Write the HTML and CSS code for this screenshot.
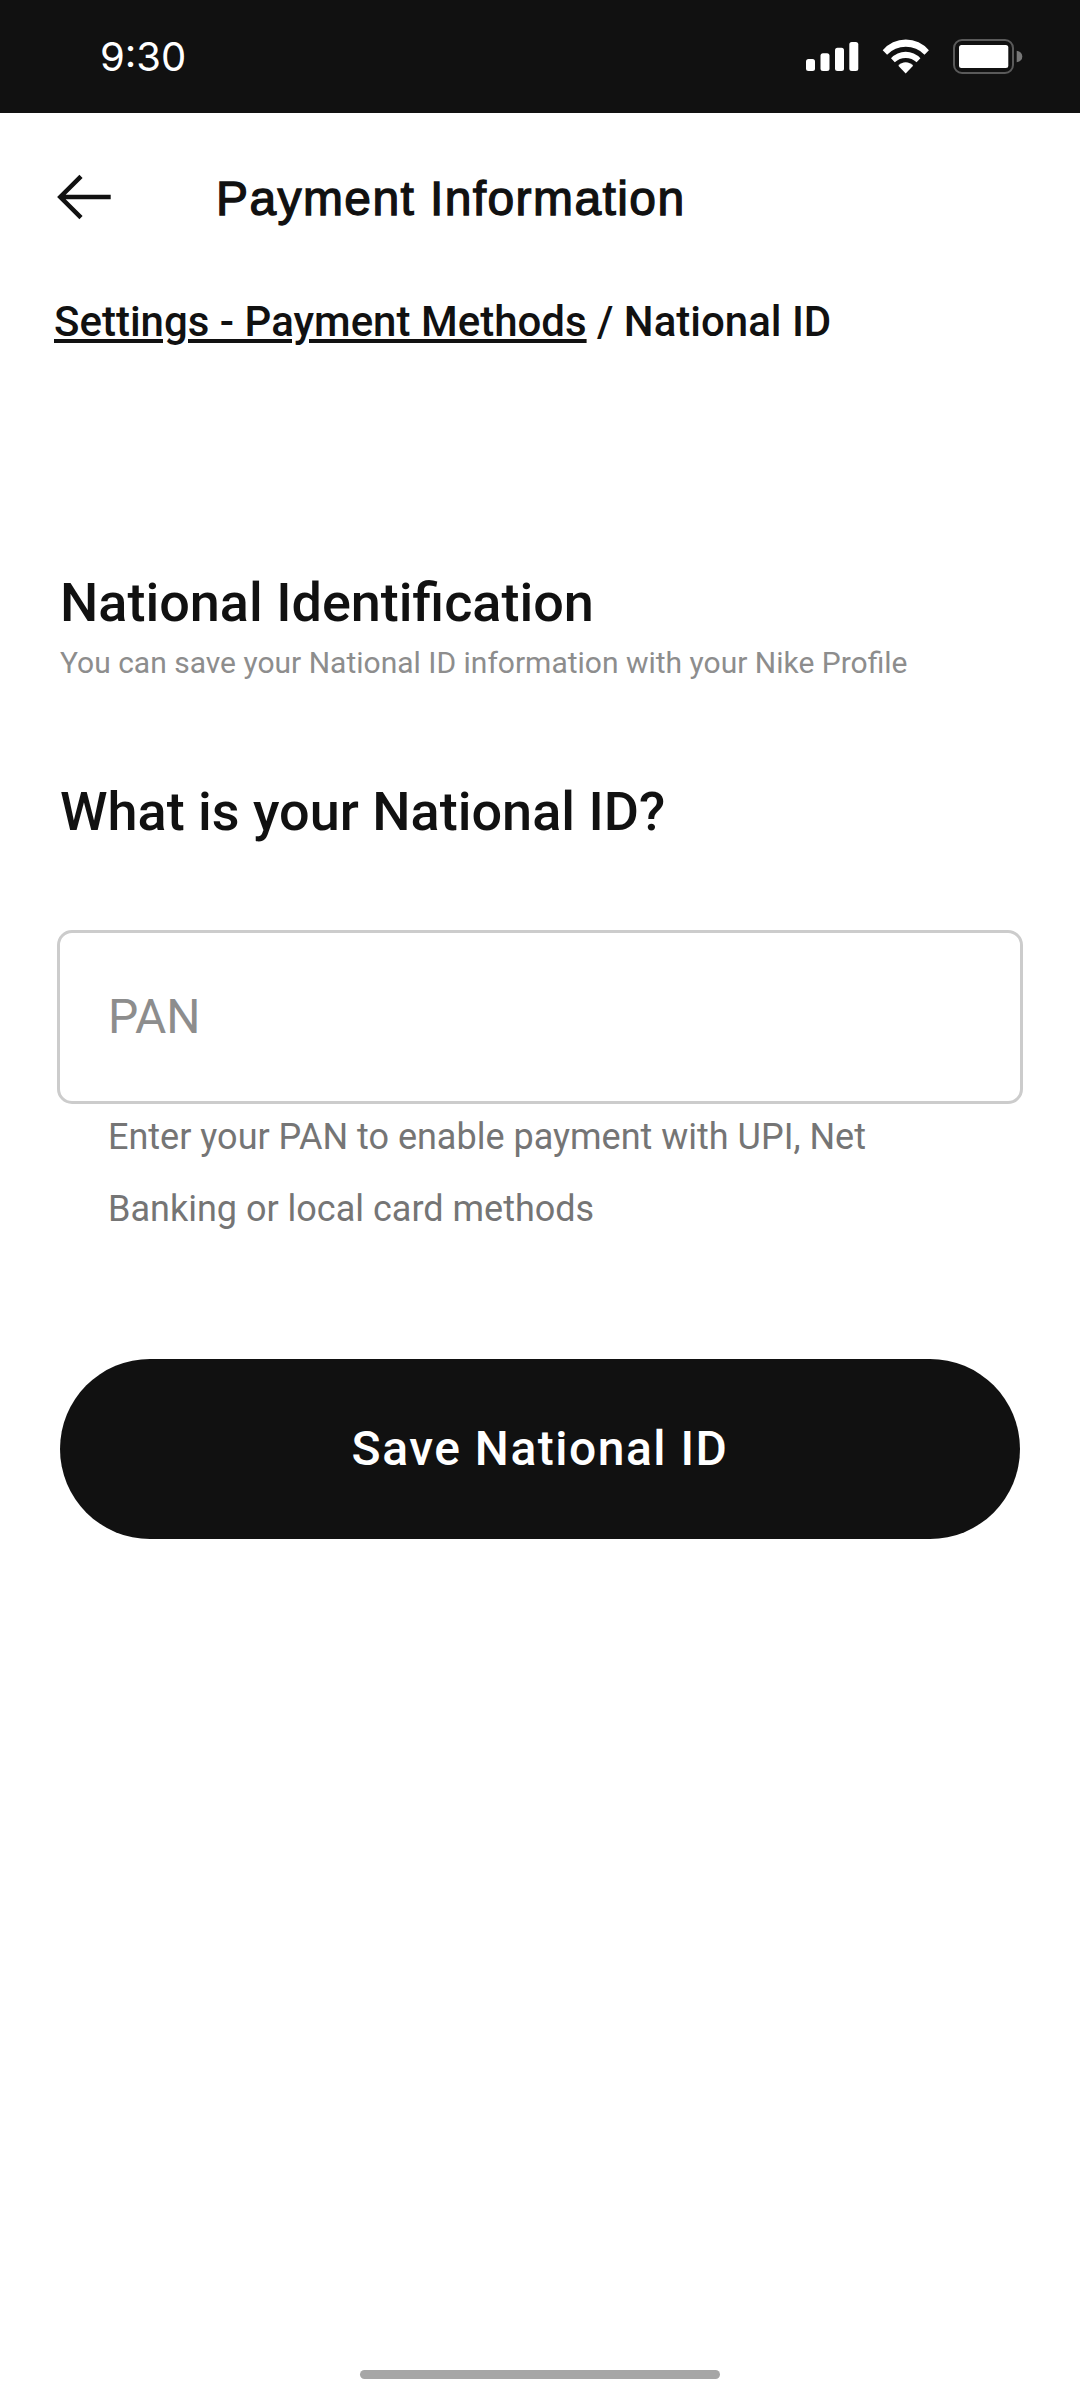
FILE: index.html
```html
<!DOCTYPE html>
<html lang="en">
<head>
<meta charset="utf-8">
<title>Payment Information</title>
<link rel="stylesheet" href="styles.css">
</head>
<body>
<div class="screen">
  <header class="status">
    <span class="time">9:30</span>
    <svg class="status-icons" width="220" height="40" viewBox="0 0 220 40" fill="#fff">
      <rect x="2" y="23" width="9" height="12" rx="2.5"/>
      <rect x="16.500" y="17.300" width="9" height="17.700" rx="2.5"/>
      <rect x="31" y="11.700" width="9" height="23.300" rx="2.5"/>
      <rect x="45.300" y="6" width="9" height="29" rx="2.5"/>
      <path d="M78.700 14.300 A30 30 0 0 1 124.900 14.300 L120.500 18.700 A26 26 0 0 0 83.100 18.700Z"/>
      <path d="M87 22.300 A20 20 0 0 1 116.400 22.300 L112.600 26.300 A16 16 0 0 0 90.800 26.300Z"/>
      <path d="M94.300 29.800 A9.500 9.500 0 0 1 109.100 29.800 L101.700 37.400Z"/>
      <rect x="150" y="4" width="59" height="33" rx="8" fill="none" stroke="#5a5a5a" stroke-width="2"/>
      <rect x="155" y="9" width="49.300" height="23" rx="2.5"/>
      <path d="M212.700 14.700 Q218.300 16 218.300 20.500 Q218.300 25 212.700 26.300Z" fill="#777"/>
    </svg>
  </header>
  <nav class="topbar">
    <svg class="back" width="56" height="48" viewBox="0 0 56 48" fill="none" stroke="#111" stroke-width="4.500"><path d="M25 3.300 L4.300 24 L25 44.700 M4.300 24 H54.700"/></svg>
    <h1 class="title">Payment Information</h1>
  </nav>
  <div class="crumbs"><a class="crumb-link">Settings - Payment Methods</a> / National ID</div>
  <main class="content">
    <h2 class="heading">National Identification</h2>
    <p class="note">You can save your National ID information with your Nike Profile</p>
    <h2 class="question">What is your National ID?</h2>
    <div class="field">PAN</div>
    <p class="help">Enter your PAN to enable payment with UPI, Net<br>Banking or local card methods</p>
    <button class="save">Save National ID</button>
  </main>
  <div class="home"></div>
</div>
</body>
</html>
```
FILE: styles.css
```css
* { box-sizing: border-box; }
body { margin: 0; background: #fff; color: #111; font-family: Roboto, sans-serif; }
h1, h2, p { margin: 0; font-weight: 500; white-space: nowrap; }
.screen { width: 1080px; height: 2400px; display: flex; flex-direction: column; }
.status { height: 113px; background: #111; color: #fff; display: flex; justify-content: space-between; padding: 36px 56px 0 100px; }
.time { font: 40px/42px Inter, sans-serif; }
.topbar { display: flex; align-items: center; height: 168px; padding-left: 56px; }
.title { font: 400 48px/56px "Liberation Sans", sans-serif; margin-left: 104px; padding-top: 4px; letter-spacing: 1.4px; -webkit-text-stroke: 1.3px #111; }
.crumbs { height: 80px; padding-left: 54px; font-size: 42px; font-weight: 500; line-height: 82px; }
.crumb-link { text-decoration: underline; text-decoration-thickness: 4px; text-underline-offset: 3px; }
.content { padding: 206px 57px 0; display: flex; flex-direction: column; }
.heading, .question { font-size: 54px; line-height: 72px; padding-left: 3px; }
.note { font-size: 30px; line-height: 48px; color: #8d8d8d; font-weight: 400; padding-left: 3px; }
.question { margin-top: 89px; }
.field { height: 174px; margin-top: 82px; border: 3px solid #ccc; border-radius: 15px; padding-left: 48px; color: #8d8d8d; font-size: 48px; line-height: 168px; }
.help { margin-top: -3px; padding-left: 51px; color: #757575; font-size: 36px; line-height: 72px; font-weight: 400; }
.save { margin: 114px 3px 0; height: 180px; border: 0; border-radius: 90px; padding: 0 0 2px; background: #111; color: #fff; font: 500 48px Roboto, sans-serif; letter-spacing: 1.500px; }
.home { width: 360px; height: 9px; margin: auto auto 21px; border-radius: 5px; background: #a6a6a6; }
```
